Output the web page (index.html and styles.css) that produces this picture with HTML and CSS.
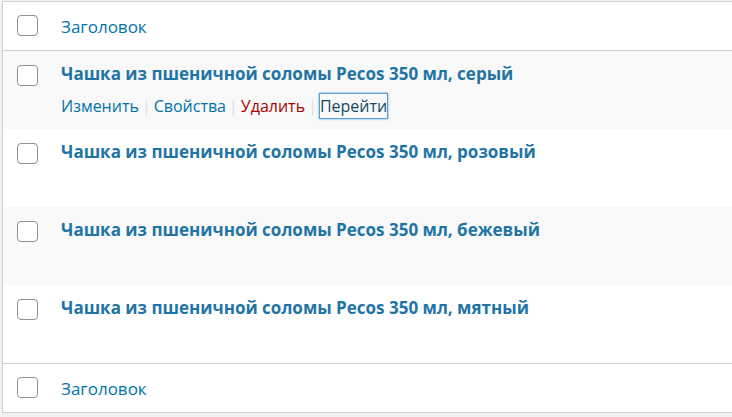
FILE: index.html
```html
<!DOCTYPE html>
<html>
<head>
    <title>Записи</title>
    <link rel="stylesheet" href="styles.css">
</head>
<body>
    <!-- List table with product posts -->
    <div class="list-table">
        <div class="row head">
            <div class="check"><span class="box"></span></div>
            <div class="title-cell"><a class="col-link" href="#">Заголовок</a></div>
        </div>

        <div class="row alt">
            <div class="check"><span class="box"></span></div>
            <div class="title-cell">
                <a class="row-title" href="#">Чашка из пшеничной соломы Pecos 350 мл, серый</a>
                <div class="row-actions">
                    <a href="#">Изменить</a><span class="sep">|</span><a href="#">Свойства</a><span class="sep">|</span><a class="delete" href="#">Удалить</a><span class="sep">|</span><a class="focused" href="#">Перейти</a>
                </div>
            </div>
        </div>

        <div class="row">
            <div class="check"><span class="box"></span></div>
            <div class="title-cell">
                <a class="row-title" href="#">Чашка из пшеничной соломы Pecos 350 мл, розовый</a>
            </div>
        </div>

        <div class="row alt">
            <div class="check"><span class="box"></span></div>
            <div class="title-cell">
                <a class="row-title" href="#">Чашка из пшеничной соломы Pecos 350 мл, бежевый</a>
            </div>
        </div>

        <div class="row">
            <div class="check"><span class="box"></span></div>
            <div class="title-cell">
                <a class="row-title" href="#">Чашка из пшеничной соломы Pecos 350 мл, мятный</a>
            </div>
        </div>

        <div class="row head foot">
            <div class="check"><span class="box"></span></div>
            <div class="title-cell"><a class="col-link" href="#">Заголовок</a></div>
        </div>
    </div>
</body>
</html>
```

FILE: styles.css
```css
/* Admin page background */
body {
    margin: 0;
    padding: 1px 0 0 2px;
    background: #f1f1f1;
    font-family: "Open Sans", Arial, sans-serif;
    font-size: 16px;
    color: #32373c;
    overflow: hidden;
}
a {
    text-decoration: none;
    color: #0073aa;
}
/* Table wrapper, wider than the window so the right edge is cut off */
.list-table {
    width: 760px;
    background: #fff;
    border: 1px solid #ccd0d4;
}
.row {
    display: flex;
    height: 78px;
    background: #fff;
}
.row.alt {
    background: #f9f9f9;
}
.row.head {
    height: 48px;
    border-bottom: 1px solid #ccd0d4;
}
.row.foot {
    border-bottom: none;
    border-top: 1px solid #ccd0d4;
}
/* Checkbox column */
.check {
    width: 44px;
    padding: 14px 0 0 14px;
    flex-shrink: 0;
}
.head .check {
    padding-top: 13px;
}
.box {
    display: block;
    width: 19px;
    height: 19px;
    border: 1px solid #8c8f94;
    border-radius: 4px;
    background: #fff;
}
.title-cell {
    padding-top: 11px;
    line-height: 24px;
}
.head .title-cell {
    padding-top: 13px;
}
.col-link {
    font-size: 17px;
}
.row-title {
    font-size: 17px;
    font-weight: 700;
    color: #1f74a6;
}
/* Row actions under the first title */
.row-actions {
    margin-top: 8px;
    font-size: 16px;
}
.row-actions .sep {
    color: #ddd;
    padding: 0 3px;
}
.row-actions .delete {
    color: #a00;
}
.row-actions .focused {
    color: #124964;
    padding: 1px 0;
    box-shadow: 0 0 0 1px #5b9dd9, 0 0 2px 1px rgba(30, 140, 190, 0.8);
}
```
